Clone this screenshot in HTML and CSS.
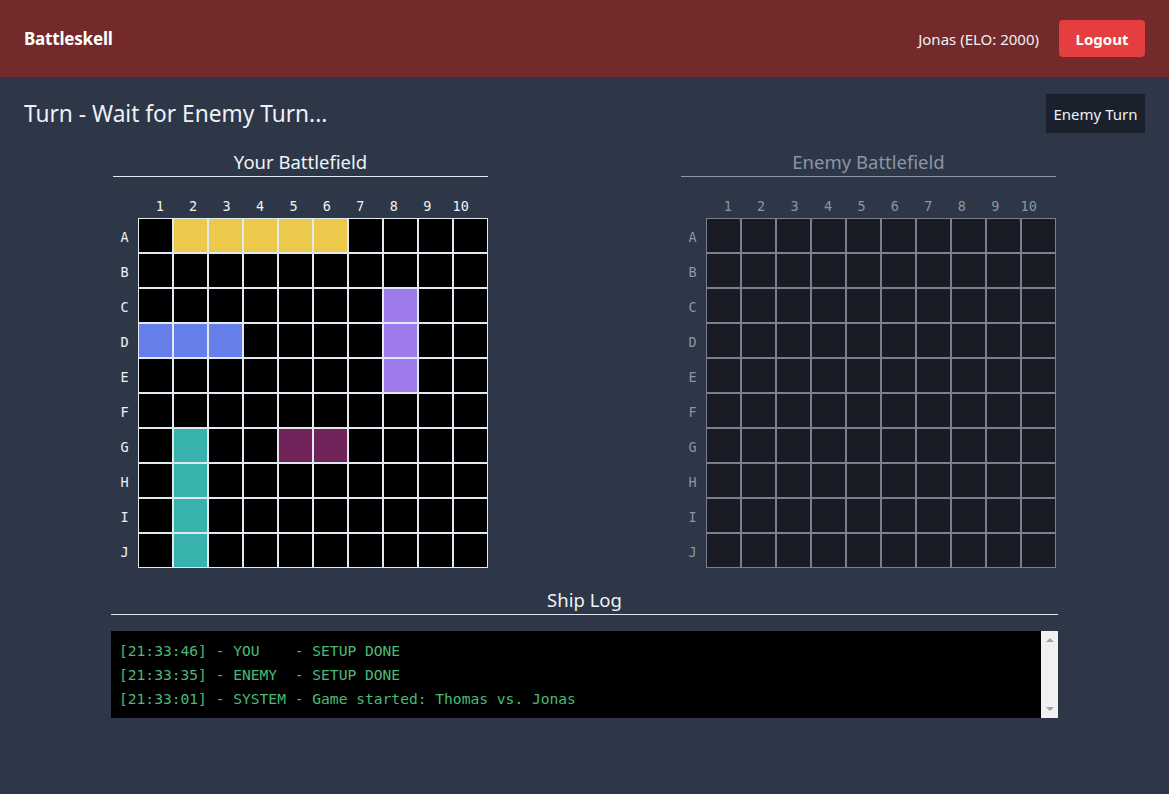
FILE: index.html
```html
<!DOCTYPE html>
<html>
<head>
<meta charset="utf-8">
<link rel="stylesheet" href="styles.css">
</head>
<body>
<header class="topbar">
  <div class="brand">Battleskell</div>
  <div class="user">
    <span class="user-name">Jonas (ELO: 2000)</span>
    <button class="logout">Logout</button>
  </div>
</header>
<main class="page">
  <div class="turn-row">
    <h1 class="turn-title">Turn - Wait for Enemy Turn...</h1>
    <div class="turn-badge">Enemy Turn</div>
  </div>
  <div class="fields">
    <section class="field mine">
      <h2 class="field-title">Your Battlefield</h2>
      <div class="col-labels" id="mine-cols"></div>
      <div class="board" id="mine"></div>
    </section>
    <section class="field enemy">
      <h2 class="field-title">Enemy Battlefield</h2>
      <div class="col-labels" id="enemy-cols"></div>
      <div class="board" id="enemy"></div>
    </section>
  </div>
  <section class="log-section">
    <h2 class="field-title">Ship Log</h2>
    <div class="log">
      <div class="log-lines">
        <div class="log-line">[21:33:46] - YOU    - SETUP DONE</div>
        <div class="log-line">[21:33:35] - ENEMY  - SETUP DONE</div>
        <div class="log-line">[21:33:01] - SYSTEM - Game started: Thomas vs. Jonas</div>
      </div>
      <div class="scrollbar">
        <span class="arrow up"></span>
        <span class="arrow down"></span>
      </div>
    </div>
  </section>
</main>
<script src="app.js"></script>
</body>
</html>
```
FILE: app.js
```js
(function () {
  var rows = "ABCDEFGHIJ".split("");
  var ships = {
    A2: "yellow", A3: "yellow", A4: "yellow", A5: "yellow", A6: "yellow",
    C8: "purple", D8: "purple", E8: "purple",
    D1: "indigo", D2: "indigo", D3: "indigo",
    G5: "pink", G6: "pink",
    G2: "teal", H2: "teal", I2: "teal", J2: "teal"
  };
  function build(id, withShips) {
    var cols = document.getElementById(id + "-cols");
    var ch = "";
    for (var c = 1; c <= 10; c++) ch += '<span class="col-label">' + c + '</span>';
    cols.innerHTML = ch;
    var board = document.getElementById(id);
    var html = "";
    rows.forEach(function (r) {
      html += '<div class="row-label">' + r + '</div>';
      for (var c = 1; c <= 10; c++) {
        var cls = withShips && ships[r + c] ? " " + ships[r + c] : "";
        html += '<div class="cell' + cls + '"></div>';
      }
    });
    board.innerHTML = html;
  }
  build("mine", true);
  build("enemy", false);
})();
```
FILE: styles.css
```css
* { box-sizing: border-box; }
html, body { margin: 0; padding: 0; }
body {
  background: #2d3748;
  color: #edf2f7;
  font-family: "Noto Sans", "Open Sans", sans-serif;
  height: 794px;
  overflow: hidden;
}
.topbar {
  height: 77px;
  background: #742a2a;
  display: flex;
  align-items: center;
  justify-content: space-between;
  padding: 0 24px;
}
.brand {
  font-weight: 700;
  font-size: 17px;
  color: #ffffff;
  letter-spacing: -0.2px;
}
.user { display: flex; align-items: center; gap: 20px; }
.user-name { font-size: 15px; color: #edf2f7; }
.logout {
  background: #e53e3e;
  color: #fff;
  border: none;
  border-radius: 4px;
  font-family: inherit;
  font-weight: 700;
  font-size: 15px;
  width: 86px;
  height: 37px;
  padding: 0;
}
.page { padding: 0 24px; }
.turn-row {
  margin-top: 17px;
  height: 39px;
  display: flex;
  align-items: center;
  justify-content: space-between;
}
.turn-title {
  margin: 0;
  font-weight: 400;
  font-size: 22.7px;
  color: #edf2f7;
}
.turn-badge {
  background: #1a202c;
  height: 39px;
  width: 99px;
  display: flex;
  align-items: center;
  justify-content: center;
  font-size: 15px;
  color: #edf2f7;
}
.fields {
  display: flex;
  justify-content: center;
  gap: 193px;
  margin-top: 15px;
}
.field { width: 375px; }
.field-title {
  margin: 0;
  font-weight: 400;
  font-size: 18.5px;
  line-height: 28px;
  text-align: center;
  border-bottom: 1px solid #e2e8f0;
}
.col-labels {
  margin-top: 19px;
  height: 22px;
  display: flex;
  padding-left: 30px;
  font-family: "DejaVu Sans Mono", "Liberation Mono", monospace;
  font-size: 13.5px;
  line-height: 16px;
}
.col-label {
  width: 33.45px;
  text-align: center;
  padding-top: 2px;
}
.board {
  display: grid;
  grid-template-columns: 25px repeat(10, 35px);
  grid-template-rows: repeat(10, 35px);
  font-family: "DejaVu Sans Mono", "Liberation Mono", monospace;
  font-size: 13.5px;
}
.row-label {
  display: flex;
  align-items: center;
  justify-content: center;
  padding-right: 2px;
  padding-top: 2px;
}
.cell {
  border: 1px solid #e2e8f0;
  background: #000;
}
.cell.yellow { background: #ecc94b; }
.cell.purple { background: #9f7aea; }
.cell.indigo { background: #667eea; }
.cell.pink { background: #702459; }
.cell.teal { background: #38b2ac; }
.enemy { color: #8c95a4; }
.enemy .field-title { border-bottom-color: #8c95a4; }
.enemy .cell { background: #191c24; border-color: #7a818e; }
.log-section {
  width: 947px;
  margin: 18px auto 0;
}
.log {
  margin-top: 16px;
  height: 87px;
  background: #000;
  display: flex;
}
.log-lines {
  flex: 1;
  padding: 8px 8px;
  font-family: "DejaVu Sans Mono", "Liberation Mono", monospace;
  font-size: 14.6px;
  line-height: 24px;
  color: #48bb78;
}
.log-line { white-space: pre; }
.scrollbar {
  width: 17px;
  background: #f1f1f1;
  display: flex;
  flex-direction: column;
  justify-content: space-between;
  align-items: center;
  padding: 7px 0;
}
.arrow { width: 0; height: 0; border-left: 4px solid transparent; border-right: 4px solid transparent; }
.arrow.up { border-bottom: 4px solid #a3a3a3; }
.arrow.down { border-top: 4px solid #a3a3a3; }
```
